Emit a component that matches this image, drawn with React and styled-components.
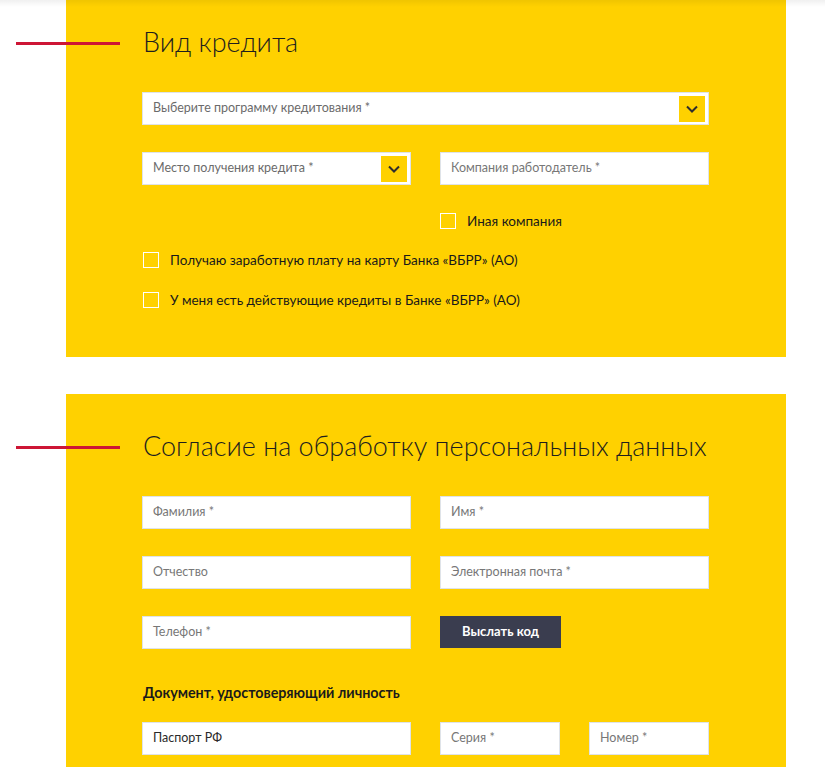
import React from 'react';
import styled, { createGlobalStyle } from 'styled-components';

const GlobalStyle = createGlobalStyle`
	body {
		margin: 0;
		background: #fff;
		font-family: Lato, 'Liberation Sans', sans-serif;
		color: #1c1c1c;
	}
`;

const Chevron = () => (
	<svg width="12" height="8" viewBox="0 0 12 8">
		<path d="M1 1.5 L6 6.5 L11 1.5" fill="none" stroke="#2e2e2e" strokeWidth="2" />
	</svg>
);

const Select = ({ children }) => (
	<SelectBox>
		<Placeholder>{children}</Placeholder>
		<ArrowBox>
			<Chevron />
		</ArrowBox>
	</SelectBox>
);

const Check = ({ children }) => (
	<CheckRow>
		<CheckSquare />
		<CheckLabel>{children}</CheckLabel>
	</CheckRow>
);

const App = () => {
	return (
		<Page>
			<GlobalStyle />
			<Shade />

			<Panel top={26} bottom={49}>
				<Title gap={34}>Вид кредита</Title>

				<Select>Выберите программу кредитования *</Select>

				<Grid mt={27}>
					<Select>Место получения кредита *</Select>
					<Input>Компания работодатель *</Input>
					<div />
					<CheckCell>
						<Check>Иная компания</Check>
					</CheckCell>
				</Grid>

				<CheckList>
					<Check>Получаю заработную плату на карту Банка «ВБРР» (АО)</Check>
					<Check>У меня есть действующие кредиты в Банке «ВБРР» (АО)</Check>
				</CheckList>
			</Panel>

			<Panel top={36} bottom={40} spaced>
				<Title gap={34}>Согласие на обработку персональных данных</Title>

				<Grid>
					<Input>Фамилия *</Input>
					<Input>Имя *</Input>
					<Input>Отчество</Input>
					<Input>Электронная почта *</Input>
					<Input>Телефон *</Input>
					<div>
						<Button>Выслать код</Button>
					</div>
				</Grid>

				<SubTitle>Документ, удостоверяющий личность</SubTitle>

				<Grid>
					<Input filled>Паспорт РФ</Input>
					<Pair>
						<Input>Серия *</Input>
						<Input>Номер *</Input>
					</Pair>
				</Grid>
			</Panel>
		</Page>
	);
};

const Page = styled.div`
	position: relative;
	padding-left: 66px;
	padding-bottom: 40px;
`;

const Shade = styled.div`
	position: absolute;
	top: 0;
	left: 0;
	right: 0;
	height: 7px;
	background: linear-gradient(rgba(0, 0, 0, 0.06), rgba(0, 0, 0, 0));
	z-index: 2;
`;

const Panel = styled.section`
	width: 720px;
	box-sizing: border-box;
	background: #ffd100;
	padding: ${(p) => p.top}px 77px ${(p) => p.bottom}px 76px;
	margin-top: ${(p) => (p.spaced ? '37px' : '0')};
`;

const Title = styled.h2`
	position: relative;
	margin: 0 0 ${(p) => p.gap}px 1px;
	font-size: 27px;
	line-height: 32px;
	font-weight: 300;
	color: #1e1e1e;

	&::before {
		content: '';
		position: absolute;
		left: -127px;
		top: 16px;
		width: 104px;
		height: 3px;
		background: #cd1635;
	}
`;

const Grid = styled.div`
	display: grid;
	grid-template-columns: 269px 269px;
	column-gap: 29px;
	row-gap: 27px;
	margin-top: ${(p) => p.mt || 0}px;
`;

const Pair = styled.div`
	display: grid;
	grid-template-columns: 120px 120px;
	column-gap: 29px;
`;

const SelectBox = styled.div`
	height: 33px;
	box-sizing: border-box;
	border: 1px solid #dfe3e8;
	background: #fff;
	display: flex;
	align-items: center;
	justify-content: space-between;
	padding: 0 3px 0 10px;
`;

const Placeholder = styled.span`
	font-size: 12.5px;
	color: #6b6b6b;
	margin-top: -2px;
`;

const ArrowBox = styled.span`
	width: 26px;
	height: 26px;
	background: #ffd100;
	display: flex;
	align-items: center;
	justify-content: center;
`;

const Input = styled.div`
	height: 33px;
	box-sizing: border-box;
	border: 1px solid #dfe3e8;
	background: #fff;
	display: flex;
	align-items: center;
	padding: 0 0 2px 10px;
	font-size: 12.5px;
	color: ${(p) => (p.filled ? '#2a2a2a' : '#777')};
`;

const CheckCell = styled.div`
	margin-top: 1px;
`;

const CheckList = styled.div`
	display: flex;
	flex-direction: column;
	gap: 24px;
	margin-top: 23px;
	margin-left: 1px;
`;

const CheckRow = styled.label`
	display: flex;
	align-items: center;
	gap: 11px;
	height: 16px;
`;

const CheckSquare = styled.span`
	width: 16px;
	height: 16px;
	box-sizing: border-box;
	border: 1px solid #fff;
	flex-shrink: 0;
`;

const CheckLabel = styled.span`
	font-size: 13.5px;
	color: #1a1a1a;
`;

const Button = styled.button`
	width: 121px;
	height: 32px;
	border: none;
	background: #3a3d4f;
	color: #fff;
	font-family: Lato, 'Liberation Sans', sans-serif;
	font-size: 13px;
	font-weight: 700;
	padding: 0 0 2px;
`;

const SubTitle = styled.h3`
	margin: 34px 0 19px 1px;
	font-size: 14.3px;
	line-height: 20px;
	font-weight: 700;
	color: #1a1a1a;
`;

export default App;
